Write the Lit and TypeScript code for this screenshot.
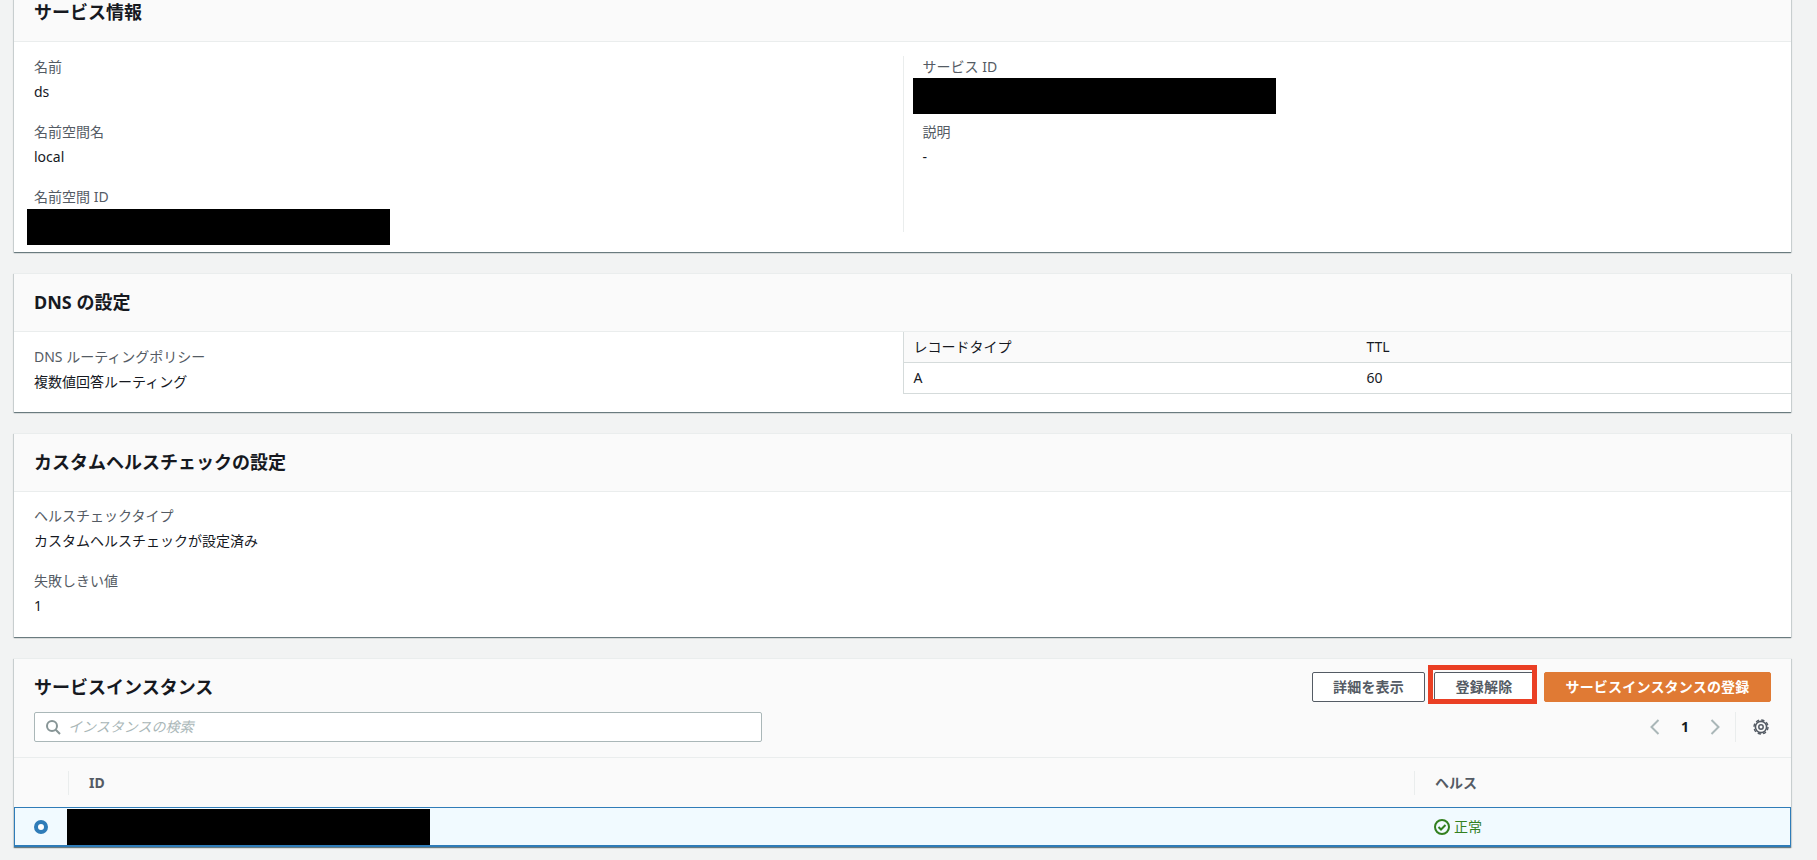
import { LitElement, html, css } from 'lit';
import { customElement } from 'lit/decorators.js';

@customElement('app-root')
class AppRoot extends LitElement {
  static styles = css`
    :host {
      display: block;
      height: 860px;
      overflow: hidden;
      background: #f2f3f3;
      color: #16191f;
      font-family: 'Noto Sans', 'Noto Sans CJK JP', sans-serif;
      font-size: 14px;
      line-height: 22px;
    }
    .page {
      display: flex;
      flex-direction: column;
      gap: 21px;
      margin-top: -17px;
      padding: 0 26px 0 14px;
    }
    .card {
      background: #fff;
      box-shadow: 0 1px 1px 0 rgba(0, 28, 36, 0.45), 1px 1px 1px 0 rgba(0, 28, 36, 0.1),
        -1px 1px 1px 0 rgba(0, 28, 36, 0.1);
      border-top: 1px solid #eaeded;
    }
    .head {
      display: flex;
      align-items: center;
      height: 55px;
      padding: 0 20px 2px;
      background: #fafafa;
      border-bottom: 1px solid #eaeded;
    }
    h2 {
      margin: 0;
      font-size: 18px;
      line-height: 26px;
      font-weight: 700;
    }
    .cols {
      display: grid;
      grid-template-columns: 1fr 1fr;
    }
    .col {
      padding: 14px 20px 0;
    }
    .col.first {
      padding-bottom: 7px;
    }
    .col.side {
      align-self: start;
      height: 176px;
      margin-top: 14px;
      padding-top: 0;
      padding-left: 19px;
      border-left: 1px solid #eaeded;
    }
    .field {
      margin-bottom: 18px;
    }
    .field.last {
      margin-bottom: 0;
    }
    .label {
      color: #545b64;
    }
    .value {
      margin-top: 3px;
    }
    .redacted {
      height: 36px;
      width: 363px;
      margin: 1px 0 0 -7px;
      background: #000;
    }
    .col.side .redacted {
      margin: 0 0 0 -10px;
    }
    .col.side .field:first-child {
      margin-bottom: 7px;
    }
    .dns {
      padding-bottom: 18px;
    }
    .dns .col {
      padding-bottom: 0;
    }
    .records {
      display: grid;
      grid-template-columns: 453px 1fr;
      border-left: 1px solid #d5dbdb;
      border-bottom: 1px solid #d5dbdb;
      align-self: start;
    }
    .records > div {
      height: 30px;
      line-height: 30px;
      padding-left: 10px;
    }
    .records .th {
      background: #fafafa;
      border-bottom: 1px solid #d5dbdb;
      color: #16191f;
    }
    .stack {
      padding: 13px 20px 20px;
    }
    .inst-head {
      display: grid;
      grid-template-columns: 1fr auto;
      align-content: start;
      row-gap: 10px;
      height: 99px;
      box-sizing: border-box;
      padding: 13px 20px 0;
      background: #fafafa;
      border-bottom: 1px solid #eaeded;
    }
    .inst-head h2 {
      align-self: center;
    }
    .actions {
      display: flex;
      gap: 9px;
    }
    button {
      width: 113px;
      height: 30px;
      box-sizing: border-box;
      border: 1px solid #545b64;
      border-radius: 2px;
      background: #fff;
      color: #545b64;
      font: 700 14px/1 'Noto Sans', 'Noto Sans CJK JP', sans-serif;
      letter-spacing: 0.2px;
      padding: 0;
    }
    button.primary {
      width: 227px;
      background: #e07a34;
      border-color: #e07a34;
      color: #fff;
    }
    .marked {
      position: relative;
      display: flex;
      margin-right: 1px;
    }
    .marked button {
      width: 100px;
    }
    .marker {
      position: absolute;
      left: -6px;
      right: -3px;
      top: -7px;
      bottom: -2px;
      border: 5px solid #ea3f24;
    }
    .search {
      display: flex;
      align-items: center;
      gap: 7px;
      width: 728px;
      height: 30px;
      box-sizing: border-box;
      padding-left: 10px;
      background: #fff;
      border: 1px solid #aab7b8;
      border-radius: 2px;
      color: #aab7b8;
      font-style: italic;
    }
    .search svg {
      flex: none;
    }
    .pager {
      display: flex;
      align-items: center;
      justify-content: flex-end;
      height: 30px;
      padding-right: 2px;
    }
    .pager .num {
      width: 44px;
      text-align: center;
      font-weight: 700;
    }
    .pager .sep {
      width: 1px;
      height: 30px;
      margin: 0 17px 0 12px;
      background: #eaeded;
    }
    .tr {
      display: grid;
      grid-template-columns: 54px 1346px 1fr;
    }
    .thead {
      height: 49px;
      background: #fafafa;
      align-items: center;
      color: #545b64;
      font-weight: 700;
    }
    .thead > div {
      height: 24px;
      line-height: 24px;
      padding-left: 20px;
    }
    .thead > div + div {
      border-left: 1px solid #eaeded;
    }
    .row {
      height: 40px;
      box-sizing: border-box;
      align-items: center;
      background: #f1faff;
      border: 1px solid #2f7cb8;
      border-bottom-width: 2px;
      grid-template-columns: 52px 1347px 1fr;
    }
    .radio {
      width: 14px;
      height: 14px;
      box-sizing: border-box;
      margin-left: 19px;
      border: 4px solid #2f7cb8;
      border-radius: 50%;
      background: #fff;
    }
    .row .redacted {
      margin: 0;
    }
    .status {
      display: flex;
      align-items: center;
      gap: 4px;
      padding-left: 20px;
      color: #33801f;
    }
  `;

  render() {
    return html`
      <div class="page">
        <section class="card">
          <div class="head"><h2>サービス情報</h2></div>
          <div class="cols">
            <div class="col first">
              <div class="field">
                <div class="label">名前</div>
                <div class="value">ds</div>
              </div>
              <div class="field">
                <div class="label">名前空間名</div>
                <div class="value">local</div>
              </div>
              <div class="field last">
                <div class="label">名前空間 ID</div>
                <div class="redacted"></div>
              </div>
            </div>
            <div class="col side">
              <div class="field">
                <div class="label">サービス ID</div>
                <div class="redacted"></div>
              </div>
              <div class="field">
                <div class="label">説明</div>
                <div class="value">-</div>
              </div>
            </div>
          </div>
        </section>

        <section class="card">
          <div class="head"><h2>DNS の設定</h2></div>
          <div class="cols dns">
            <div class="col">
              <div class="label">DNS ルーティングポリシー</div>
              <div class="value">複数値回答ルーティング</div>
            </div>
            <div class="records">
              <div class="th">レコードタイプ</div>
              <div class="th">TTL</div>
              <div>A</div>
              <div>60</div>
            </div>
          </div>
        </section>

        <section class="card">
          <div class="head"><h2>カスタムヘルスチェックの設定</h2></div>
          <div class="stack">
            <div class="field">
              <div class="label">ヘルスチェックタイプ</div>
              <div class="value">カスタムヘルスチェックが設定済み</div>
            </div>
            <div class="field last">
              <div class="label">失敗しきい値</div>
              <div class="value">1</div>
            </div>
          </div>
        </section>

        <section class="card">
          <div class="inst-head">
            <h2>サービスインスタンス</h2>
            <div class="actions">
              <button>詳細を表示</button>
              <div class="marked">
                <button>登録解除</button>
                <div class="marker"></div>
              </div>
              <button class="primary">サービスインスタンスの登録</button>
            </div>
            <div class="search">
              <svg width="16" height="16" viewBox="0 0 16 16" fill="none" stroke="#879596" stroke-width="2">
                <circle cx="7" cy="7" r="5"></circle>
                <path d="M10.7 10.7 15 15"></path>
              </svg>
              <span>インスタンスの検索</span>
            </div>
            <div class="pager">
              <svg width="16" height="16" viewBox="0 0 16 16" fill="none" stroke="#aab7b8" stroke-width="2">
                <path d="M11.5 1 4.5 8l7 7"></path>
              </svg>
              <span class="num">1</span>
              <svg width="16" height="16" viewBox="0 0 16 16" fill="none" stroke="#aab7b8" stroke-width="2">
                <path d="M4.5 1l7 7-7 7"></path>
              </svg>
              <span class="sep"></span>
              <svg width="16" height="16" viewBox="0 0 16 16" fill="none" stroke="#545b64">
                <circle cx="8" cy="8" r="5.6" stroke-width="1.6"></circle>
                <circle cx="8" cy="8" r="7" stroke-width="1.4" stroke-dasharray="3.3 2.2"></circle>
                <circle cx="8" cy="8" r="2.2" stroke-width="1.5"></circle>
              </svg>
            </div>
          </div>
          <div class="tr thead">
            <div></div>
            <div>ID</div>
            <div>ヘルス</div>
          </div>
          <div class="tr row">
            <div class="radio"></div>
            <div class="redacted"></div>
            <div class="status">
              <svg width="16" height="16" viewBox="0 0 16 16" fill="none" stroke="#33801f" stroke-width="2">
                <circle cx="8" cy="8" r="7"></circle>
                <path d="M4.5 8l2.5 2.5 4.5-4.5"></path>
              </svg>
              <span>正常</span>
            </div>
          </div>
        </section>
      </div>
    `;
  }
}
